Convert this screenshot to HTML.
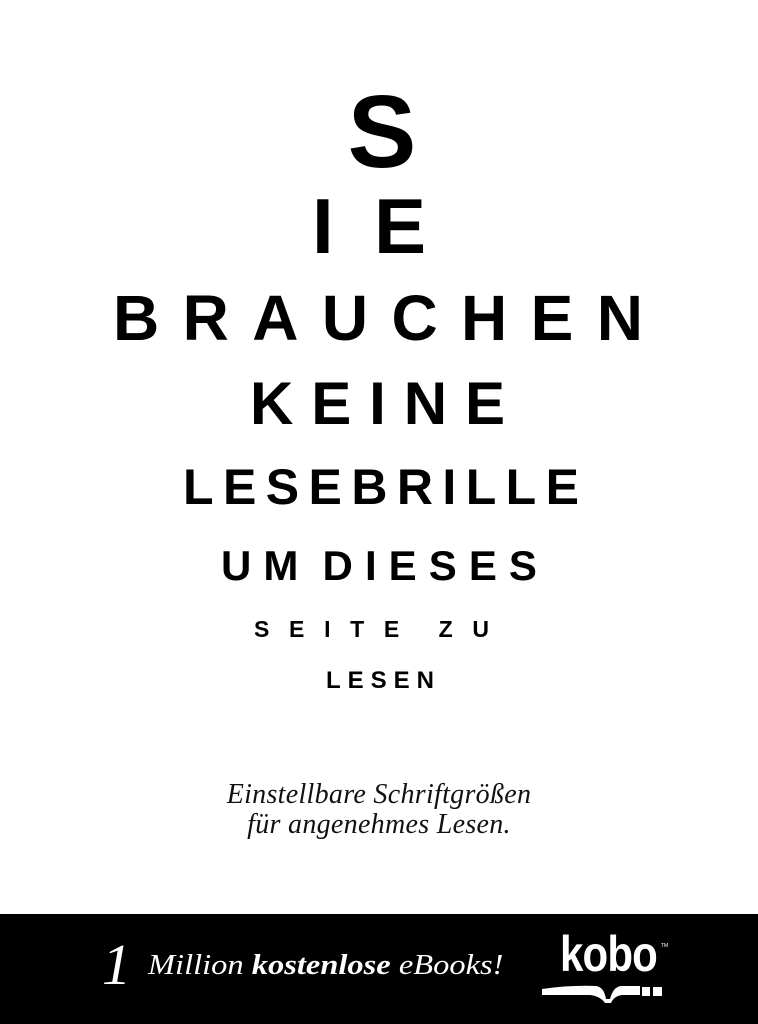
<!DOCTYPE html>
<html><head><meta charset="utf-8"><style>
html,body{margin:0;padding:0;background:#fff;}
body{width:758px;height:1024px;position:relative;overflow:hidden;font-family:"Liberation Sans",sans-serif;}
.l{position:absolute;display:flex;justify-content:space-between;font-weight:bold;line-height:1;color:#000;white-space:pre;}
.l span{display:block;}
.it{position:absolute;left:0;width:758px;text-align:center;font-family:"Liberation Serif",serif;font-style:italic;font-size:28px;color:#111;line-height:1;letter-spacing:0.3px;}
.bar{position:absolute;left:0;top:914px;width:758px;height:110px;background:#000;}
</style></head><body>
<div class="l" style="left:352px;width:60px;top:80px;font-size:103px;justify-content:center"><span>S</span></div>
<div class="l" style="left:312px;width:114px;top:187px;font-size:78px"><span>I</span><span>E</span></div>
<div class="l" style="left:113px;width:530px;top:286px;font-size:64px"><span>B</span><span>R</span><span>A</span><span>U</span><span>C</span><span>H</span><span>E</span><span>N</span></div>
<div class="l" style="left:250px;width:255px;top:374px;font-size:60px"><span>K</span><span>E</span><span>I</span><span>N</span><span>E</span></div>
<div class="l" style="left:183px;width:396px;top:462px;font-size:50px"><span>L</span><span>E</span><span>S</span><span>E</span><span>B</span><span>R</span><span>I</span><span>L</span><span>L</span><span>E</span></div>
<div class="l" style="left:221px;width:316px;top:545px;font-size:42px"><span>U</span><span>M</span><span></span><span>D</span><span>I</span><span>E</span><span>S</span><span>E</span><span>S</span></div>
<div class="l" style="left:254px;width:235px;top:618px;font-size:23px"><span>S</span><span>E</span><span>I</span><span>T</span><span>E</span><span></span><span>Z</span><span>U</span></div>
<div class="l" style="left:326px;width:108px;top:669px;font-size:24px"><span>L</span><span>E</span><span>S</span><span>E</span><span>N</span></div>
<div class="it" style="top:781px">Einstellbare Schriftgrößen</div>
<div class="it" style="top:811px">für angenehmes Lesen.</div>
<div class="bar"></div>
<div style="position:absolute;left:102px;top:936px;font-family:'Liberation Serif',serif;font-style:italic;font-size:58px;color:#fff;line-height:1;">1</div>
<div style="position:absolute;left:148px;top:952px;font-family:'Liberation Serif',serif;font-style:italic;font-size:28px;color:#fff;line-height:1;white-space:nowrap;transform:scaleX(1.16);transform-origin:0 0;">Million <b>kostenlose</b> eBooks!</div>
<div style="position:absolute;left:560px;top:929px;font-family:'Liberation Sans',sans-serif;font-weight:bold;font-size:50px;color:#fff;line-height:1;letter-spacing:-1px;transform:scaleX(0.84);transform-origin:0 0;">kobo</div>
<div style="position:absolute;left:661px;top:943px;font-size:5px;color:#fff;">TM</div>
<svg style="position:absolute;left:0;top:0" width="758" height="1024">
<path d="M542 989 Q570 985 596 986 Q604 987 606 999 L610 999 Q613 987 621 986 L640 986 L640 995 L622 995 Q614 996 611 1003 L605 1003 Q600 996 590 995 L542 995 Z" fill="#fff"/>
<rect x="642" y="987" width="8" height="9" fill="#fff"/>
<rect x="653" y="987" width="9" height="9" fill="#fff"/>
</svg>
</body></html>
